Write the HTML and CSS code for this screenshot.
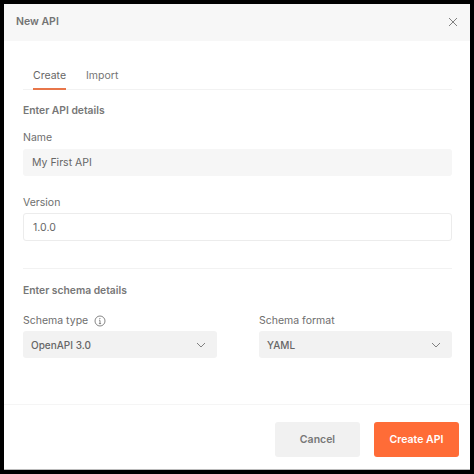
FILE: index.html
```html
<!DOCTYPE html>
<html lang="en">
<head>
<meta charset="utf-8">
<title>New API</title>
<link rel="stylesheet" href="styles.css">
</head>
<body>
<div class="dialog">
  <header class="head">
    <span class="title">New API</span>
    <svg class="close" viewBox="0 0 10 10" width="10" height="10"><path d="M1 1l8 8M9 1L1 9"/></svg>
  </header>
  <main class="body">
    <nav class="tabs">
      <span class="tab active">Create</span>
      <span class="tab">Import</span>
    </nav>
    <h2 class="section first">Enter API details</h2>
    <label class="label">Name</label>
    <div class="field filled">My First API</div>
    <label class="label second">Version</label>
    <div class="field outlined">1.0.0</div>
    <hr class="rule">
    <h2 class="section">Enter schema details</h2>
    <div class="cols">
      <div class="col">
        <label class="label withicon">Schema type
          <svg class="info" viewBox="0 0 12 12" width="12" height="12"><circle cx="6" cy="6" r="5"/><path d="M6 5.4v3M4.9 8.6h2.2M5 5.2h1"/><circle class="dot" cx="5.9" cy="3.5" r=".6"/></svg>
        </label>
        <div class="field select">OpenAPI 3.0<svg class="chev" viewBox="0 0 10 6" width="10" height="6"><path d="M1 1l4 4 4-4"/></svg></div>
      </div>
      <div class="col">
        <label class="label withicon">Schema format</label>
        <div class="field select">YAML<svg class="chev" viewBox="0 0 10 6" width="10" height="6"><path d="M1 1l4 4 4-4"/></svg></div>
      </div>
    </div>
  </main>
  <footer class="foot">
    <button class="btn cancel">Cancel</button>
    <button class="btn primary">Create API</button>
  </footer>
</div>
</body>
</html>
```
FILE: styles.css
```css
* { box-sizing: border-box; }
html, body { margin: 0; padding: 0; background: #000; }
body { width: 474px; height: 474px; padding: 4px; font-family: Inter, "Liberation Sans", sans-serif; }
.dialog { width: 466px; height: 466px; background: #fff; display: flex; flex-direction: column; border-bottom: 1px solid #bbb; }
.head { height: 37px; flex: none; background: #f7f7f7; display: flex; align-items: center; justify-content: space-between; padding: 0 12px 2px 12px; }
.title { font-size: 10.5px; font-weight: 600; color: #737373; }
.close { fill: none; stroke: #808080; stroke-width: 1; }
.body { flex: 1; padding: 0 18px 0 19px; }
.tabs { margin-top: 22px; height: 27px; border-bottom: 1px solid #f2f2f2; display: flex; gap: 20px; padding-left: 10px; }
.tab { font-size: 10.5px; color: #757575; height: 27px; line-height: 25px; }
.tab.active { border-bottom: 2px solid #e8764a; color: #666; }
.section { margin: 14px 0 0; font-size: 10.3px; font-weight: 600; color: #777; line-height: 14px; }
.section.first { margin-top: 13px; }
.label { display: block; font-size: 10.5px; color: #6e6e6e; line-height: 14px; margin-top: 14px; }
.label.second { margin-top: 20px; }
.field { height: 27px; margin-top: 4px; border-radius: 3px; font-size: 10.5px; color: #666; display: flex; align-items: center; padding: 0 9px; }
.filled { background: #f6f6f6; }
.outlined { background: #fff; border: 1px solid #ececec; height: 28px; margin-top: 3px; }
.rule { border: 0; border-top: 1px solid #f2f2f2; margin: 27px 0 0; }
.cols { display: flex; gap: 42px; }
.col { width: 194px; }
.col + .col { width: 193px; }
.withicon { display: flex; align-items: center; gap: 6px; margin-top: 17px; }
.info { fill: none; stroke: #777; stroke-width: .9; }
.info .dot { fill: #777; stroke: none; }
.select { background: #f2f2f2; font-weight: 500; font-size: 10px; justify-content: space-between; padding: 0 11px 0 8px; margin-top: 3px; }
.chev { fill: none; stroke: #808080; stroke-width: 1; }
.foot { flex: none; height: 65px; border-top: 1px solid #f5f5f5; display: flex; justify-content: flex-end; gap: 14px; padding: 17px 11px 0 0; }
.btn { width: 85px; height: 35px; border: 0; border-radius: 3px; font-family: inherit; font-size: 10.5px; font-weight: 600; padding: 0; }
.cancel { background: #f1f1f1; color: #777; }
.primary { background: #ff6c37; color: #fff; }
```
